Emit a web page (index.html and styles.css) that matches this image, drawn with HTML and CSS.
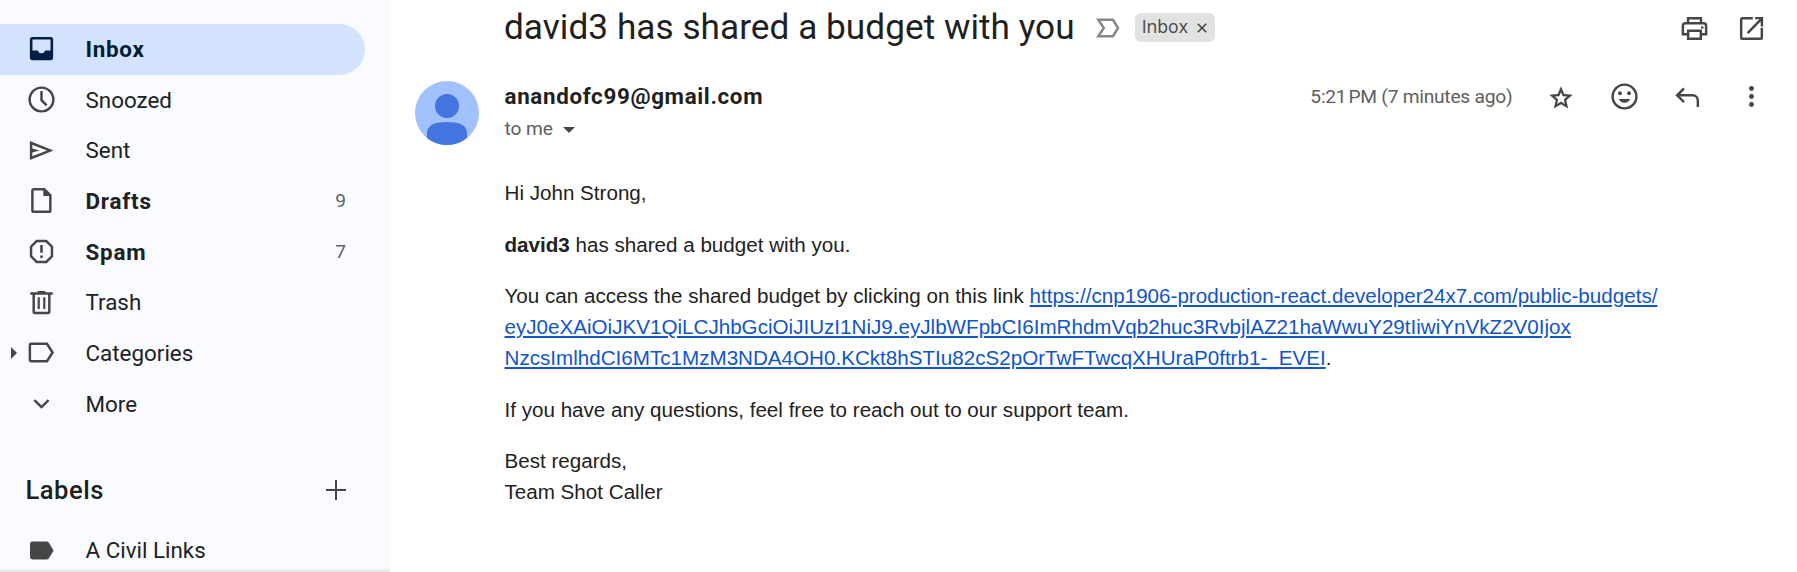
FILE: index.html
```html
<!DOCTYPE html>
<html lang="en">
<head>
<meta charset="utf-8">
<title>david3 has shared a budget with you</title>
<link rel="stylesheet" href="styles.css">
</head>
<body>
<div class="app">
  <nav class="sidebar">
    <a class="nav-item active"><svg class="nav-icon" viewBox="0 0 24 24"><path fill-rule="evenodd" d="M5 3h14a2 2 0 0 1 2 2v14a2 2 0 0 1-2 2H5a2 2 0 0 1-2-2V5a2 2 0 0 1 2-2zm0 2v8.500h4q1 2.200 3 2.200t3-2.200h4V5z"/></svg><span class="nav-text">Inbox</span></a>
    <a class="nav-item"><svg class="nav-icon" viewBox="0 0 24 24"><circle class="line" cx="12" cy="12" r="9.200"/><path class="line" d="M12 5.500v7l4 4"/></svg><span class="nav-text">Snoozed</span></a>
    <a class="nav-item"><svg class="nav-icon" viewBox="0 0 24 24"><path fill-rule="evenodd" d="M3 4.700 21.300 12 3 19.300zM4.900 7.500v3L10.500 12l-5.600 1.500v3L16.300 12z"/></svg><span class="nav-text">Sent</span></a>
    <a class="nav-item strong"><svg class="nav-icon" viewBox="0 0 24 24"><path fill-rule="evenodd" d="M6 2.300h8.500l5.300 5.300v12.100a2 2 0 0 1-2 2H6a2 2 0 0 1-2-2V4.300a2 2 0 0 1 2-2zM5.900 4.200v15.600h12V8.600h-4.500V4.200z"/></svg><span class="nav-text">Drafts</span><span class="count">9</span></a>
    <a class="nav-item strong"><svg class="nav-icon" viewBox="0 0 24 24"><path class="line" d="M8.300 3.900h7.400l4.400 4.400v7.400l-4.400 4.400H8.300l-4.400-4.400V8.300z"/><path d="M11 7h2v6h-2zM11 15h2v2h-2z"/></svg><span class="nav-text">Spam</span><span class="count">7</span></a>
    <a class="nav-item"><svg class="nav-icon" viewBox="0 0 24 24"><path fill-rule="evenodd" d="M3.300 4H9V3h6v1h5.700v2h-1.700v13a2 2 0 0 1-2 2H7a2 2 0 0 1-2-2V6H3.300zm3.600 2v13.200h10.200V6zM9 8h1.700v9H9zM13.300 8H15v9h-1.700z"/></svg><span class="nav-text">Trash</span></a>
    <a class="nav-item"><svg class="expand" viewBox="0 0 6 12"><path d="M0 0l6 6-6 6z"/></svg><svg class="nav-icon" viewBox="0 0 24 24"><path class="line" d="M4 5.300h12.200L20.600 12l-4.400 6.700H4a1 1 0 0 1-1-1V6.300a1 1 0 0 1 1-1z"/></svg><span class="nav-text">Categories</span></a>
    <a class="nav-item"><svg class="nav-icon" viewBox="0 0 24 24"><path class="line" d="M6.500 9.300l5.500 5.500 5.500-5.500"/></svg><span class="nav-text">More</span></a>
    <div class="labels-head"><span>Labels</span><svg class="plus" viewBox="0 0 20 20"><path d="M0 9h9V0h2v9h9v2h-9v9H9v-9H0z"/></svg></div>
    <a class="nav-item"><svg class="nav-icon" viewBox="0 0 24 24"><path d="M5 5h11q1 0 1.600.900L21.400 12l-3.800 6.100Q17 19 16 19H5q-1.900 0-1.900-1.900V6.900Q3.100 5 5 5z"/></svg><span class="nav-text">A Civil Links</span></a>
    <div class="sidebar-edge"></div>
  </nav>

  <main class="mail">
    <header class="subject">
      <h1 class="subject-text">david3 has shared a budget with you</h1>
      <svg class="marker" viewBox="0 0 24 20"><path d="M2.300 1.800h14.700L22 10l-5 8.200H2.300L7.800 10z"/></svg>
      <span class="chip">Inbox<svg class="chip-x" viewBox="0 0 10 10"><path d="M.700.700l8.600 8.600M9.300.700.700 9.300"/></svg></span>
      <div class="subject-actions">
        <svg class="icon" viewBox="0 0 24 24"><path class="line" d="M7 16.500H3V10a2 2 0 0 1 2-2h14a2 2 0 0 1 2 2v6.500h-4M7 8V4h10v4M7.100 13.700h9.800V20H7.100z"/><circle cx="18" cy="11.300" r="1"/></svg>
        <svg class="icon" viewBox="0 0 24 24"><path class="line" d="M13 4H5a1 1 0 0 0-1 1v14a1 1 0 0 0 1 1h14a1 1 0 0 0 1-1v-7.500M9 15.500L19.700 4.500"/><path d="M14.800 3H21v7.500h-1.900V4.900h-4.300z"/></svg>
      </div>
    </header>

    <section class="message">
      <svg class="avatar" viewBox="0 0 64 64"><circle cx="32" cy="32" r="32" fill="#a1c2fd"/><circle cx="32" cy="25" r="12" fill="#4374e0"/><path d="M12 57V52C12 44 20 41 32 41s20 3 20 11v5A32 32 0 0 1 12 57z" fill="#4374e0"/></svg>
      <div class="content">
        <div class="sender-row">
          <div class="sender">
            <div class="from">anandofc99@gmail.com</div>
            <div class="to">to me<svg class="caret" viewBox="0 0 12 6"><path d="M0 0h12L6 6z"/></svg></div>
          </div>
          <div class="meta">
            <span class="date">5:21&#8239;PM (7 minutes ago)</span>
            <svg class="icon star" viewBox="0 0 24 24"><path d="M22 9.240l-7.190-.620L12 2 9.190 8.630 2 9.240l5.460 4.730L5.820 21 12 17.270 18.180 21l-1.630-7.030L22 9.240zM12 15.100l-3.300 2 .900-3.800-2.900-2.500 3.800-.300L12 7l1.500 3.500 3.800.300-2.900 2.500.900 3.800z"/></svg>
            <svg class="icon" viewBox="0 0 24 24"><circle class="line" cx="12" cy="12" r="9.200"/><circle cx="8.500" cy="9.500" r="1.500"/><circle cx="15.500" cy="9.500" r="1.500"/><path d="M7.600 14h8.800a4.800 4.800 0 0 1-8.800 0z"/></svg>
            <svg class="icon" viewBox="0 0 24 24"><path class="line" d="M9.300 5.800L4 11.100l5.300 5.300M4 11.100H16a4 4 0 0 1 4 4v5.100"/></svg>
            <svg class="icon" viewBox="0 0 24 24"><circle cx="12" cy="5.800" r="1.900"/><circle cx="12" cy="12" r="1.900"/><circle cx="12" cy="18.200" r="1.900"/></svg>
          </div>
        </div>
        <div class="body">
          <p>Hi John Strong,</p>
          <p><b>david3</b> has shared a budget with you.</p>
          <p>You can access the shared budget by clicking on this link <a class="link">https://cnp1906-production-react.developer24x7.com/public-budgets/<br>eyJ0eXAiOiJKV1QiLCJhbGciOiJIUzI1NiJ9.eyJlbWFpbCI6ImRhdmVqb2huc3RvbjlAZ21haWwuY29tIiwiYnVkZ2V0Ijox<br>NzcsImlhdCI6MTc1MzM3NDA4OH0.KCkt8hSTIu82cS2pOrTwFTwcqXHUraP0ftrb1-_EVEI</a>.</p>
          <p>If you have any questions, feel free to reach out to our support team.</p>
          <p>Best regards,<br>Team Shot Caller</p>
        </div>
      </div>
    </section>
  </main>
</div>
</body>
</html>
```
FILE: styles.css
```css
* { box-sizing: border-box; }

body {
  margin: 0;
  background: #fff;
  color: #1f1f1f;
  font-family: Roboto, "Open Sans", sans-serif;
}

svg { display: block; flex: none; fill: #444746; }
.line { fill: none; stroke: #444746; stroke-width: 1.9; }

.app { display: flex; height: 572px; overflow: hidden; }

/* Sidebar */
.sidebar {
  position: relative;
  width: 390px;
  flex: none;
  padding-top: 24px;
  background: #f9fbff;
  overflow: hidden;
}
.nav-item {
  position: relative;
  display: flex;
  align-items: center;
  width: 365px;
  height: 50.7px;
  padding: 0 19px 1px 25.500px;
  border-radius: 0 26px 26px 0;
  font-size: 22.4px;
  color: #202124;
}
.nav-item.active { background: #d3e3fd; color: #001d35; font-weight: 700; letter-spacing: .7px; }
.nav-item.active .nav-icon { fill: #041e49; }
.nav-item.strong .nav-text { font-weight: 700; letter-spacing: .8px; }
.nav-icon { width: 31px; height: 31px; }
.nav-text { flex: 1; margin-left: 29px; }
.count { font-size: 19.2px; color: #5f6368; }
.expand { position: absolute; left: 11px; width: 6px; height: 12px; }
.labels-head {
  display: flex;
  align-items: center;
  justify-content: space-between;
  height: 51px;
  margin: 35.600px 0 9.500px;
  padding: 0 44px 1px 25.500px;
  font-size: 25.6px;
  font-weight: 500;
  letter-spacing: .5px;
}
.plus { width: 20px; height: 20px; }
.sidebar-edge {
  position: absolute;
  inset: auto 0 0 0;
  height: 4px;
  background: linear-gradient(#f9fbff, #dfe1e5);
}

/* Subject line */
.mail { flex: 1; min-width: 0; }
.subject {
  display: flex;
  align-items: center;
  height: 54px;
  padding: 0 30.500px 0 114px;
}
.subject-text { margin: 0; font-size: 35.2px; font-weight: 400; letter-spacing: .03px; white-space: nowrap; }
.marker { width: 24px; height: 20px; margin: 1px 0 0 21px; }
.marker path { fill: none; stroke: #868887; stroke-width: 2.5; }
.chip {
  display: flex;
  align-items: center;
  gap: 9px;
  height: 29px;
  margin: 1px 0 0 15.500px;
  padding: 0 8px 2px 6.500px;
  border-radius: 6px;
  background: #e1e3e1;
  color: #444746;
  font: 17.6px/27px "Open Sans", sans-serif;
}
.chip-x { width: 10px; height: 10px; margin-top: 3px; }
.chip-x path { fill: none; stroke: #444746; stroke-width: 1.6; }
.subject-actions { display: flex; gap: 26px; margin: 2px 0 0 auto; }
.icon { width: 31px; height: 31px; }

/* Message */
.message { display: flex; gap: 25px; padding: 27px 30.500px 0 25px; }
.avatar { width: 64px; height: 64px; }
.content { flex: 1; min-width: 0; padding-left: .5px; }
.sender-row { display: flex; justify-content: space-between; }
.from { font-size: 22.4px; line-height: 31px; font-weight: 700; letter-spacing: .65px; }
.to { display: flex; align-items: center; gap: 10.500px; line-height: 33px; font-size: 19.2px; letter-spacing: -.1px; color: #5e5e5e; }
.caret { width: 12px; height: 6px; margin-top: 3px; }
.meta { display: flex; align-items: center; height: 31px; gap: 32.300px; }
.meta .star { width: 28px; height: 28px; margin: 3px 2px 0 2px; }
.date { font-size: 19.2px; letter-spacing: -.25px; color: #5e5e5e; }

.body {
  padding-top: 32.300px;
  color: #222;
  font: 20.620px/31px "Liberation Sans", Arial, sans-serif;
}
.body p { margin: 0 0 20.500px; white-space: nowrap; }
.link {
  color: #1155cc;
  text-decoration: underline;
  text-decoration-thickness: 2px;
  text-underline-offset: 2px;
}
```
